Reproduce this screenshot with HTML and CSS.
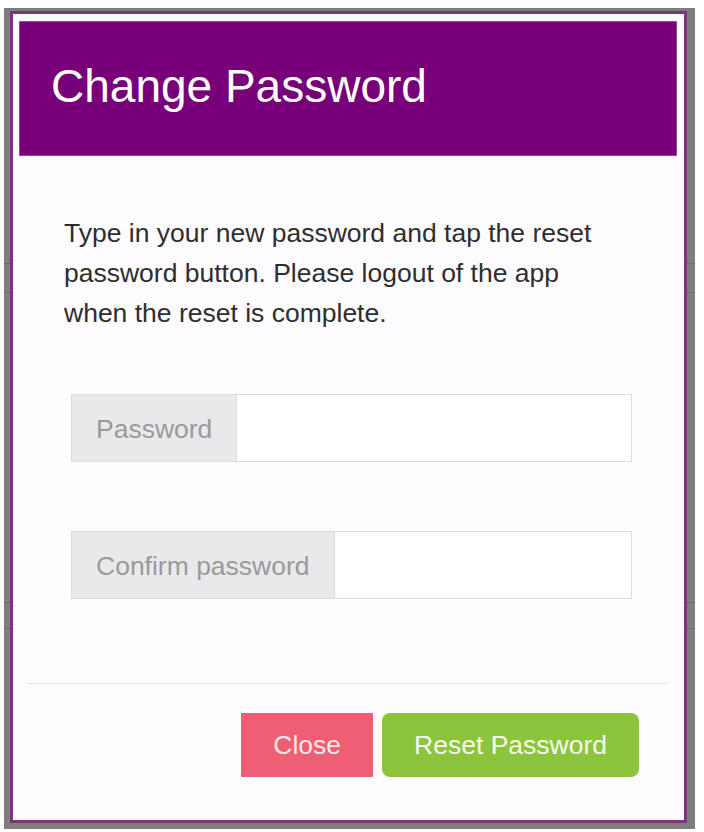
FILE: index.html
```html
<!DOCTYPE html>
<html lang="en">
<head>
<meta charset="utf-8">
<title>Change Password</title>
<link rel="stylesheet" href="styles.css">
</head>
<body>
<div class="backdrop">
  <div class="modal">
    <div class="modal-header">
      <h1 class="modal-title">Change Password</h1>
    </div>
    <div class="modal-body">
      <p class="intro">Type in your new password and tap the reset password button. Please logout of the app when the reset is complete.</p>
      <div class="input-group">
        <span class="addon">Password</span>
        <input class="field" type="password">
      </div>
      <div class="input-group second">
        <span class="addon">Confirm password</span>
        <input class="field" type="password">
      </div>
    </div>
    <div class="divider"></div>
    <div class="modal-footer">
      <button class="btn btn-close" type="button">Close</button>
      <button class="btn btn-reset" type="button">Reset Password</button>
    </div>
  </div>
</div>
</body>
</html>
```

FILE: styles.css
```css
html, body {
  margin: 0;
  padding: 0;
  background: #ffffff;
}

body {
  padding: 8px 0 0 4px;
  font-family: "Liberation Sans", Arial, Helvetica, sans-serif;
}

.backdrop {
  width: 691px;
  height: 821px;
  box-sizing: border-box;
  padding: 3px 0 0 6px;
  background-color: #7e7d80;
  background-image:
    linear-gradient(#6a696c, #6a696c),
    linear-gradient(#6a696c, #6a696c),
    linear-gradient(#6a696c, #6a696c),
    linear-gradient(#6a696c, #6a696c);
  background-repeat: no-repeat;
  background-size: 100% 1px, 100% 1px, 100% 1px, 100% 1px;
  background-position: 0 255px, 0 284px, 0 594px, 0 620px;
}

.modal {
  width: 677px;
  height: 812px;
  box-sizing: border-box;
  border: 3px solid #7b347d;
  background: #fffcff;
  padding: 8px 8px 0 7px;
  display: flex;
  flex-direction: column;
}

.modal-header {
  height: 133px;
  background: #770078;
  display: flex;
  align-items: center;
  padding-left: 31px;
  box-shadow: 0 0 0 1px #9a4a9c;
}

.modal-title {
  margin: 0;
  font-weight: normal;
  font-size: 46px;
  line-height: 1;
  color: #ffffff;
  position: relative;
  top: -3px;
}

.modal-body {
  padding: 0 0 0 44px;
}

.intro {
  margin: 58px 0 0 0;
  width: 545px;
  font-size: 26.5px;
  line-height: 40px;
  color: #2e2e2e;
}

.input-group {
  display: flex;
  width: 561px;
  height: 68px;
  box-sizing: border-box;
  margin: 61px 0 0 7px;
  border: 1px solid #dcdcdc;
  background: #ffffff;
}

.input-group.second {
  margin-top: 69px;
}

.addon {
  display: flex;
  align-items: center;
  padding: 2px 24px 0;
  background: #e9e9eb;
  border-right: 1px solid #dcdcdc;
  color: #9a9a9a;
  font-size: 26.5px;
  white-space: nowrap;
}

.field {
  flex: 1;
  min-width: 0;
  border: 0;
  outline: 0;
  background: #ffffff;
  margin: 0;
  padding: 0 12px;
}

.divider {
  height: 1px;
  background: #e6e4e8;
  margin: 84px 8px 0 7px;
}

.modal-footer {
  display: flex;
  justify-content: flex-end;
  gap: 9px;
  padding: 29px 37px 0 0;
}

.btn {
  height: 64px;
  border: 0;
  margin: 0;
  padding: 0 32px;
  font-family: "Liberation Sans", Arial, Helvetica, sans-serif;
  font-size: 26.5px;
  color: #ffffff;
  cursor: pointer;
}

.btn-close {
  background: #ee5f74;
  color: #fde8ec;
  border-radius: 1px;
}

.btn-reset {
  background: #8cc53c;
  color: #f6fbee;
  border-radius: 8px;
}
```
